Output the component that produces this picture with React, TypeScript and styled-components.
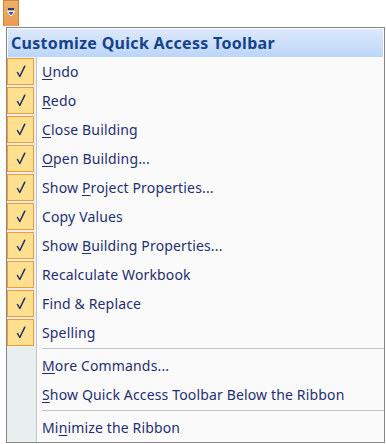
import React from "react";
import styled, { createGlobalStyle } from "styled-components";

const GlobalStyle = createGlobalStyle`
    html, body {
        margin: 0;
        padding: 0;
        background: #ffffff;
        font-family: "Noto Sans", "Open Sans", sans-serif;
    }
`;

const Page = styled.div`
    width: 386px;
    height: 444px;
    position: relative;
    overflow: hidden;
    background: #ffffff;
`;

const QatButton = styled.div`
    margin-left: 3px;
    width: 16px;
    height: 26px;
    box-sizing: border-box;
    border: 1px solid #c98a3c;
    border-bottom: none;
    background: linear-gradient(#f0b06a, #e89a52);
    display: flex;
    justify-content: center;
    padding-top: 7px;
`;

const Menu = styled.div`
    margin-left: 6px;
    margin-top: 1px;
    width: 379px;
    height: 416px;
    box-sizing: border-box;
    border: 1px solid #868686;
    background: #fafafa;
    display: flex;
    flex-direction: column;
`;

const Header = styled.div`
    height: 29px;
    box-sizing: border-box;
    margin: 1px 1px 0 1px;
    background: linear-gradient(#dde9fc, #bcd6f8);
    color: #15428b;
    font-weight: 700;
    font-size: 16px;
    letter-spacing: 0.3px;
    padding-left: 3px;
    display: flex;
    align-items: center;
`;

const Body = styled.div`
    flex: 1;
    display: flex;
    flex-direction: column;
    background: linear-gradient(to right, #e9eeee 0, #e9eeee 29px, #c5c5c5 29px, #c5c5c5 30px, #fafafa 30px);
`;

const Row = styled.div`
    height: 29px;
    flex-shrink: 0;
    display: flex;
    align-items: center;
`;

const Check = styled.div<{ $on: boolean }>`
    width: 27px;
    height: 27px;
    box-sizing: border-box;
    margin-right: 8px;
    border: 1px solid ${(p) => (p.$on ? "#f29b38" : "transparent")};
    background: ${(p) => (p.$on ? "#ffe08f" : "transparent")};
    display: flex;
    align-items: center;
    justify-content: center;
`;

const Label = styled.span`
    font-size: 14px;
    letter-spacing: 0.15px;
    color: #1e2f70;
    white-space: nowrap;
    u {
        text-decoration-thickness: 1px;
        text-underline-offset: 2px;
    }
`;

const Separator = styled.div`
    height: 1px;
    flex-shrink: 0;
    margin: 1px 0 2px 35px;
    background: #c5c5c5;
`;

const Tick = () => (
    <svg width="10" height="13" viewBox="0 0 10 13">
        <path d="M1.5 7.5 L3.8 11.5 L8.8 1.2" fill="none" stroke="#1c2d6b" strokeWidth="1.5" strokeLinejoin="round" strokeLinecap="round" />
    </svg>
);

const DropArrow = () => (
    <svg width="8" height="9" viewBox="0 0 8 9">
        <rect x="1" y="0" width="6" height="2" fill="#1f3f8f" />
        <path d="M0.5 3.5 H7.5 L4 8 Z" fill="#2a52b0" stroke="#ffffff" strokeWidth="1" />
    </svg>
);

type Item = { pre: string; key?: string; post?: string };

const checkedItems: Item[] = [
    { pre: "", key: "U", post: "ndo" },
    { pre: "", key: "R", post: "edo" },
    { pre: "", key: "C", post: "lose Building" },
    { pre: "", key: "O", post: "pen Building..." },
    { pre: "Show ", key: "P", post: "roject Properties..." },
    { pre: "Copy Values" },
    { pre: "Show ", key: "B", post: "uilding Properties..." },
    { pre: "Recalculate Workbook" },
    { pre: "Find & Replace" },
    { pre: "Spelling" },
];

function MenuRow({ item, checked }: { item: Item; checked: boolean }) {
    return (
        <Row>
            <Check $on={checked}>{checked && <Tick />}</Check>
            <Label>
                {item.pre}
                {item.key && <u>{item.key}</u>}
                {item.post}
            </Label>
        </Row>
    );
}

export default function App() {
    return (
        <>
            <GlobalStyle />
            <Page>
                <QatButton>
                    <DropArrow />
                </QatButton>
                <Menu>
                    <Header>Customize Quick Access Toolbar</Header>
                    <Body>
                        {checkedItems.map((it, i) => (
                            <MenuRow key={i} item={it} checked />
                        ))}
                        <Separator />
                        <MenuRow item={{ pre: "", key: "M", post: "ore Commands..." }} checked={false} />
                        <MenuRow item={{ pre: "", key: "S", post: "how Quick Access Toolbar Below the Ribbon" }} checked={false} />
                        <Separator />
                        <MenuRow item={{ pre: "Mi", key: "n", post: "imize the Ribbon" }} checked={false} />
                    </Body>
                </Menu>
            </Page>
        </>
    );
}
